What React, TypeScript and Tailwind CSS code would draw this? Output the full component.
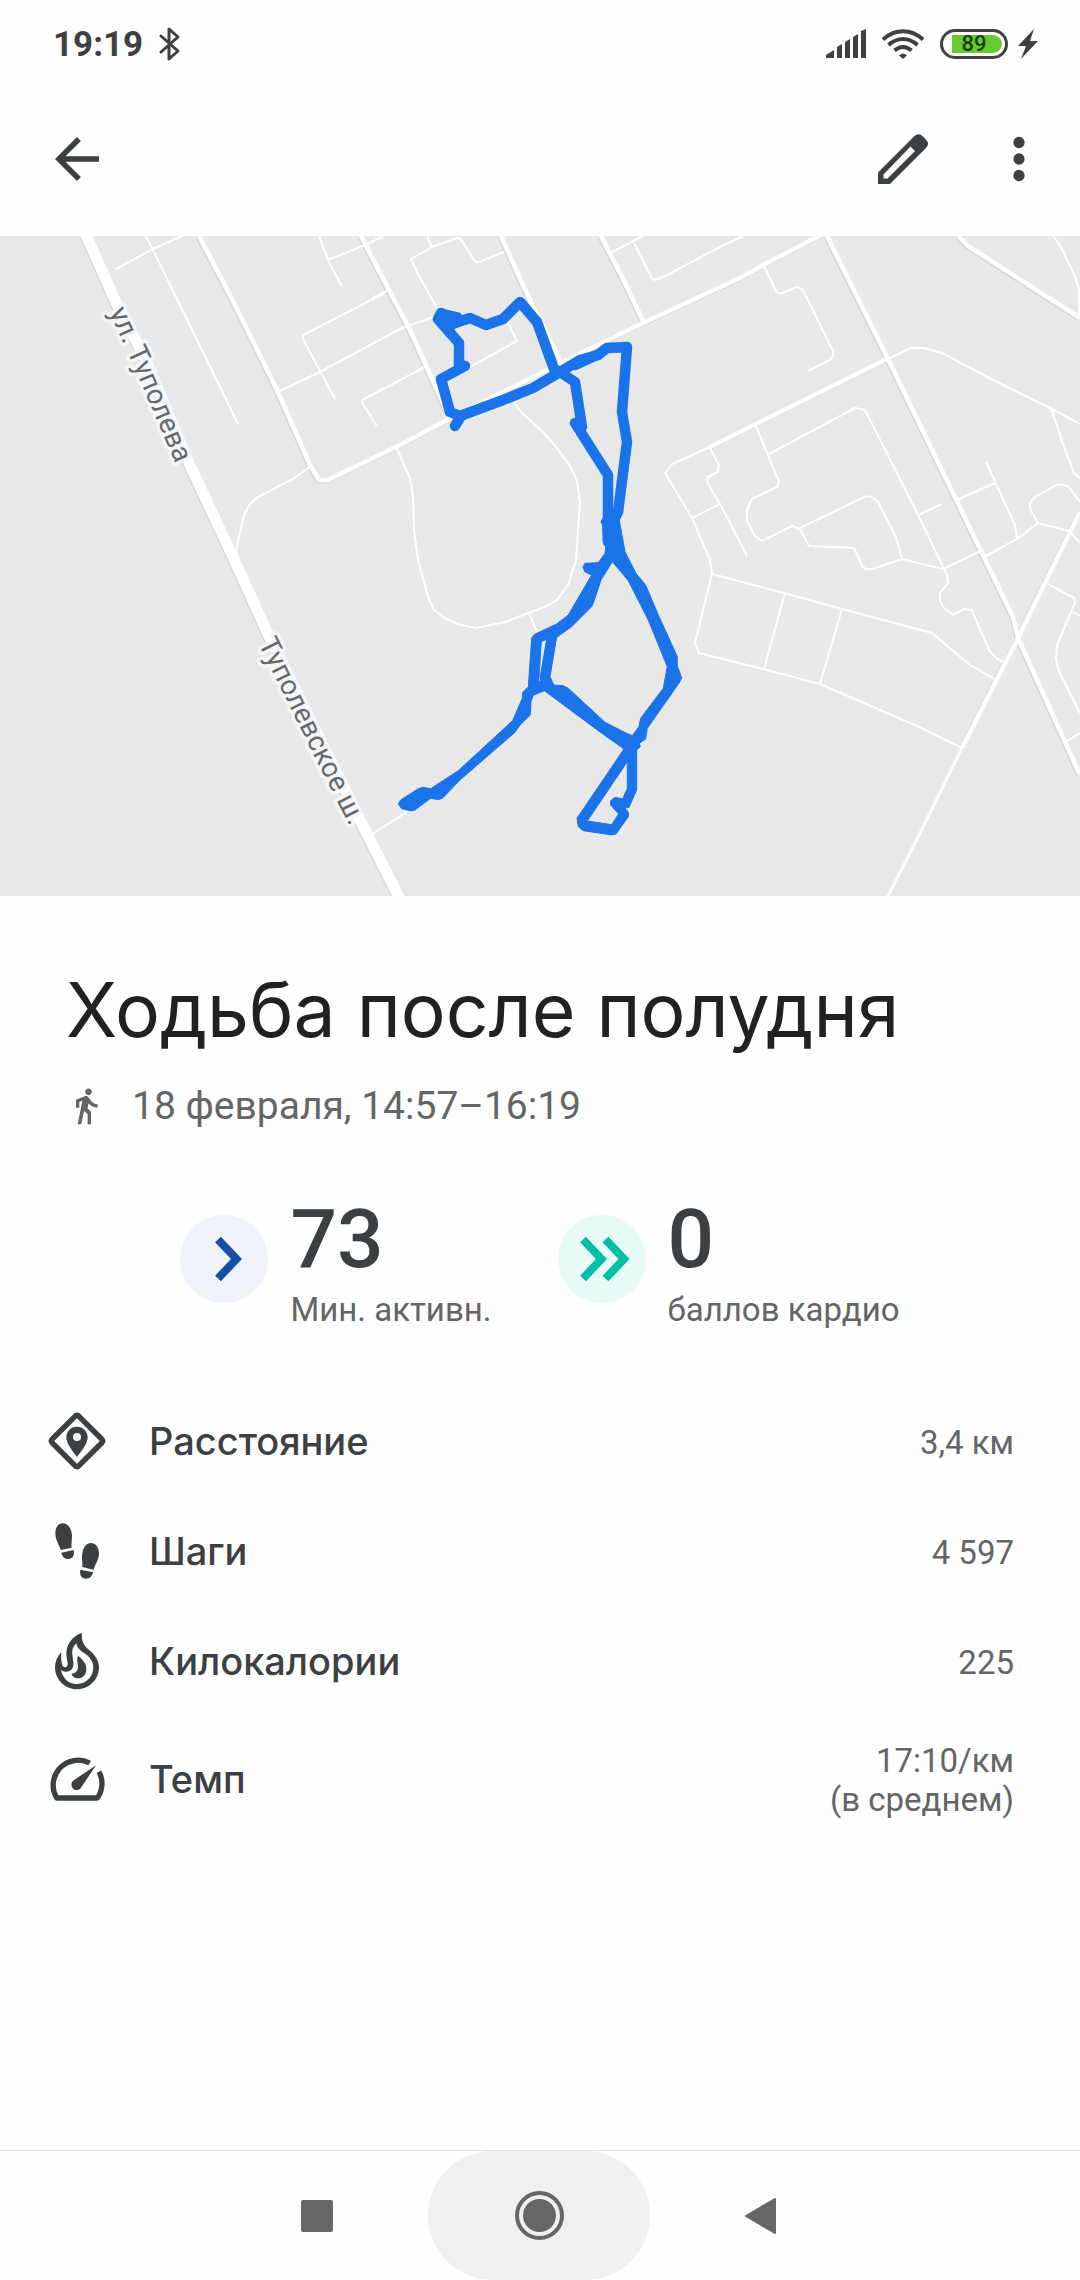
import type { ReactNode } from "react";

const MINOR_ROADS = [
  "M146 0L153 14L180 69L238 188",
  "M116 33L153 13L184 -1",
  "M310 231L293 243L258 261L250 268L244 279L235 319",
  "M278 156L320 136L400 93L408 90L433 81",
  "M385 57L305 98Q301 100 304 105L335 163",
  "M372 62L387 55",
  "M425 131L364 163Q361 164 363 168L377 190",
  "M319 0L328 24L342 51M328 24L365 9L386 -1",
  "M427 0L432 11M437 72L417 36L411 23L432 11L457 2Q460 2 462 5L474 24Q476 27 479 26L504 16",
  "M612 16L643 0M634 7L651 41Q653 45 658 43L667 39L720 11L743 0",
  "M508 87L517 105L470 131",
  "M514 167L522 177L543 196L553 207L570 230L577 245L580 267L576 324L568 349L557 364L545 371L528 377L505 386L476 392L457 388L443 381L434 374L428 361L418 324L414 294L413 261L410 242L396 211",
  "M529 377L537 396M407 576L380 593L373 598",
  "M708 212L672 228L665 237L692 282L710 324L712 338L695 407L699 417L763 433L820 448L917 490L962 512",
  "M712 338L784 357L842 373L932 397L970 429L996 444M785 357L764 433M842 373L820 448",
  "M710 212L719 229L718 236L708 241L707 246L720 268L747 320M692 282L720 268",
  "M888 123L911 112L924 112L942 117L993 144L1050 172L1080 188",
  "M1051 172L1063 208L1074 237L1080 242M1053 0L1061 11L1074 38L1079 54L1079 80",
  "M764 30L776 55Q778 58 782 57L797 51L803 54L833 115Q834 120 830 124L808 135",
  "M756 190L779 246L777 251L752 263L747 274L747 285L755 300L762 305L792 290L800 293L809 310L854 312L863 331Q866 334 872 333L902 323L943 333L983 314",
  "M769 218L855 172L865 174L918 279L947 339L948 347L940 357L940 365L944 372L953 379L964 373L972 374L989 414L997 423L1005 426",
  "M800 292L862 262Q870 257 878 266L896 301L902 323M918 279L942 268",
  "M957 264L995 247M986 226L1015 289L1017 303M986 320L1017 303L1038 287L1069 295L1080 307",
  "M1038 287L1030 273L1030 267L1035 261L1058 248L1068 250L1080 266",
  "M1048 348L1074 362L1075 367L1057 409L1056 423L1059 435L1080 477M1073 376L1080 380M1067 505L1080 497",
].join("");

const STREETS = [
  "M199 0L233 65L277 154L310 229L319 244L328 244L400 209L447 184L553 131L643 87L740 42L765 28L823 -2",
  "M361 0L380 37L410 94L447 176",
  "M501 0L522 47L538 81L562 128",
  "M601 0L625 47L644 87",
  "M708 212L740 196L887 123",
  "M827 0L888 123L1013 381L1018 402L1080 539",
  "M1080 276L1018 402L962 512",
  "M958 0L968 10L1080 82",
].join("");

const HIGHWAY = "M83 -8L118 71L145 122L188 225L233 321L267 396L362 588L402 667";

function RouteMap() {
  return (
    <svg viewBox="0 0 1080 660" className="block w-full bg-[#e8e8e8]" role="img" aria-label="Маршрут">
      <g fill="none" stroke="#d5d6d6" transform="translate(-1 1)">
        <path d={STREETS} strokeWidth="5" />
        <path d={HIGHWAY} strokeWidth="11" />
      </g>
      <g fill="none" stroke="#fff" strokeLinejoin="round">
        <path d={MINOR_ROADS} strokeWidth="2" />
        <path d="M962 512L917 603L887 662" strokeWidth="3" />
        <path d={STREETS} strokeWidth="4.500" />
        <path d={HIGHWAY} strokeWidth="11" />
      </g>

      <defs>
        <path id="street-north" d="M109 76L131 124L180 238" />
        <path id="street-south" d="M258 407L275 441L315 522L361 612" />
      </defs>
      <g
        className="font-['Roboto',sans-serif] text-[28px]"
        fill="#66696b"
        stroke="#f4f5f6"
        strokeWidth="7"
        strokeLinejoin="round"
        paintOrder="stroke"
      >
        <text>
          <textPath href="#street-north">ул. Туполева</textPath>
        </text>
        <text>
          <textPath href="#street-south">Туполевское ш.</textPath>
        </text>
      </g>

      {/* upper loops of the walk */}
      <g fill="none" stroke="#1a73e8" strokeWidth="10.500" strokeLinecap="round" strokeLinejoin="round">
        <path d="M452 88L470 82L486 89L503 83L520 66L537 86L554 133L560 136" />
        <path d="M441 77L438 83L459 107L459 129L465 130L441 143L450 176L460 180L503 164L533 152L560 136L580 124L598 119L607 112L627 111L622 176L627 206L618 276L612 288" />
        <path d="M455 190L461 180M575 129L597 119" />
        <path d="M560 136L575 146L582 191M575 187L608 239L608 306" />
      </g>
      <path
        d="M441 77L438 83L451 91L458 81Z"
        fill="#1a73e8"
        stroke="#1a73e8"
        strokeWidth="9"
        strokeLinejoin="round"
      />
      <path d="M570 187L587 189L580 200Z" fill="#1a73e8" />
      {/* lower part, where several passes merge into one shape */}
      <path
        transform="translate(380 324) scale(.3333)"
        fill="#1a73e8"
        stroke="#1a73e8"
        strokeWidth="3"
        strokeLinejoin="round"
        fillRule="evenodd"
        d="M716 -130L735 -25L750 5L768 40L797 75L835 165L892 290L892 318L905 353L900 365L802 505L797 537L778 550L781 560L770 570L770 690L747 742L735 744L746 758L745 770L708 822L695 825L610 812L595 800L591 775L732 567L655 512L493 392L460 406L453 425L451 465L420 495L405 517L240 660L188 714L175 719L152 715L105 750L92 753L65 746L55 732L62 720L115 686L128 682L152 686L235 632L398 482L427 415L428 398L445 380L455 235L462 224L530 192L565 165L635 45L615 36L609 22L615 10L655 8L675 -20L678 -45L670 -55L668 -105L663 -115L670 -128Z
           M697 5L745 62L805 180L862 320L850 385L782 475L777 500L757 527L740 520L675 487L565 385L550 377L522 375L510 350L530 232L575 200L635 140L640 130L663 60Z
           M484 245L500 238L481 350L482 362L476 367Z
           M742 605L742 685L728 717L705 712L692 722L692 735L716 762L695 794L622 783Z"
      />
    </svg>
  );
}

function StatusBar() {
  return (
    <div className="flex h-22 items-center justify-between pr-[42px] pl-[53px] text-[#3f4041]">
      <div className="flex items-center gap-4">
        <span className="text-[35px] leading-none font-bold">19:19</span>
        <svg viewBox="0 0 22 34" className="h-[34px] w-[22px]" fill="none" stroke="currentColor" strokeWidth="3" strokeLinejoin="round" strokeLinecap="round">
          <path d="M2 9L19 24L10 32V2L19 10L2 25" />
        </svg>
      </div>
      <div className="flex items-center">
        <svg viewBox="0 0 40 30" className="mr-4 h-[30px] w-10" fill="currentColor">
          <path d="M0 29v-3l8-5v8zM11 29V18l5-3v14zM19 29V13l5-3v19zM27 29V8l5-3v24zM35 29V2l5-2v29z" />
        </svg>
        <svg viewBox="0 0 42 30" className="mr-4 h-[30px] w-[42px]" fill="none" stroke="currentColor" strokeWidth="4">
          <path d="M1 10.500C13-.5 29-.5 41 10.500M6.500 16C15.500 8 26.500 8 35.500 16M12.500 21.500C18 17 24 17 29.500 21.500" />
          <path d="M17 26.500c2.500-2.500 5.500-2.500 8 0l-4 3.500z" fill="currentColor" stroke="none" />
        </svg>
        <div className="relative flex h-[30px] w-17 items-center justify-center rounded-full border-3 border-current">
          <div className="absolute inset-y-[3px] right-[3px] left-[9px] rounded-l-xs rounded-r-full bg-[#67cb2e]" />
          <span className="relative text-[22px] leading-none font-medium text-[#17400a]">89</span>
        </div>
        <svg viewBox="0 0 20 30" className="ml-[10px] h-[30px] w-5" fill="currentColor">
          <path d="M16 0L0 17h8L3 30L20 12h-8z" />
        </svg>
      </div>
    </div>
  );
}

function AppBar() {
  return (
    <header className="flex h-37 items-center justify-between pr-7 pb-1.5 pl-11 text-[#3c4043]">
      <button aria-label="Назад">
        <svg viewBox="0 0 24 24" className="size-[66px]" fill="currentColor">
          <path d="M20 11H7.830l5.590-5.590L12 4l-8 8 8 8 1.410-1.410L7.830 13H20v-2z" />
        </svg>
      </button>
      <div className="flex items-center gap-[50px]">
        <button aria-label="Изменить">
          <svg viewBox="0 0 66 66" className="size-[66px]" fill="currentColor" fillRule="evenodd">
            <path d="M8 58V46.500L44 10.500Q48.500 6 53 10.500L56 13.500Q60 18 56 22L20 58ZM13.500 52.500H17.500L45 25L40.500 20.500L13.500 48.500Z" />
          </svg>
        </button>
        <button aria-label="Ещё">
          <svg viewBox="0 0 24 24" className="size-[66px]" fill="currentColor">
            <circle cx="12" cy="6" r="2.050" />
            <circle cx="12" cy="12" r="2.050" />
            <circle cx="12" cy="18" r="2.050" />
          </svg>
        </button>
      </div>
    </header>
  );
}

function Score({ value, label, badge, children }: { value: string; label: string; badge: string; children: ReactNode }) {
  return (
    <div className="flex items-start gap-[22px]">
      <div className={`mt-[18px] flex size-22 items-center justify-center rounded-full ${badge}`}>{children}</div>
      <div>
        <div className="text-[82px] leading-[84px] font-medium text-[#3c4043]">{value}</div>
        <div className="mt-[9px] text-[33px] leading-[39px] text-[#636567]">{label}</div>
      </div>
    </div>
  );
}

const METRICS = [
  {
    label: "Расстояние",
    value: ["3,4 км"],
    icon: (
      <svg viewBox="135 57 192 192" className="size-16" fill="currentColor">
        <path d="M225 79Q231 72 237 79L305 147Q311 153 305 159L237 227Q231 234 225 227L157 159Q151 153 157 147Z" fill="none" stroke="currentColor" strokeWidth="16" />
        <path fillRule="evenodd" d="M231 110c-18 0-32 14-32 32 0 20 20 42 32 59 12-17 32-39 32-59 0-18-14-32-32-32zm0 19a12 12 0 1 1 0 24 12 12 0 0 1 0-24z" />
      </svg>
    ),
  },
  {
    label: "Шаги",
    value: ["4 597"],
    icon: (
      <svg viewBox="135 387 192 192" className="size-16" fill="currentColor">
        <path d="M188 400c14-1 27 14 28 37 0 14-3 26-1 36l-33 7c-4-14-16-30-16-50 0-18 8-29 22-30z" />
        <path d="M184 488l37-8c3 14-2 27-17 27-12 0-17-8-20-19z" />
        <path d="M272 459c16 0 25 14 25 32 0 18-12 32-16 48l-34-8c1-12-2-20-1-34 2-22 12-38 26-38z" />
        <path d="M241 539l38 8c-3 12-9 19-21 19-14 0-20-12-17-27z" />
      </svg>
    ),
  },
  {
    label: "Килокалории",
    value: ["225"],
    icon: (
      <svg viewBox="135 719 192 192" className="size-16" fill="currentColor">
        <path
          fillRule="evenodd"
          d="M246 731c-3 30 10 42 24 53 17 14 27 31 27 50 0 37-30 66-66 66s-66-29-66-66c0-18 7-33 19-46-1 14-1 20 1 30 1 10 4 16 10 16s9-6 8-14c-2-10-4-18-4-28 1-31 22-54 47-61zM229 762c-10 9-14 20-12 34l3 22c2 16-5 28-19 29-8 0-13-2-18-6 4 24 22 43 48 43 28 0 49-22 49-50 0-14-7-27-19-37-18-12-29-18-32-35z"
        />
        <path d="M234 799c15 12 25 24 25 40 0 17-10 28-25 28-9 0-17-5-20-14 12-1 20-9 20-20 0-13-5-20 0-34z" />
      </svg>
    ),
  },
  {
    label: "Темп",
    value: ["17:10/км", "(в среднем)"],
    icon: (
      <svg viewBox="135 1071 192 192" className="size-16" fill="currentColor">
        <path d="M269 1119A75 75 0 0 0 170 1224H292A75 75 0 0 0 297 1145" fill="none" stroke="currentColor" strokeWidth="16" strokeLinejoin="round" />
        <path d="M288 1126L245 1190A16 16 0 1 1 221 1171Z" />
      </svg>
    ),
  },
];

function NavBar() {
  return (
    <nav className="flex h-[130px] justify-center border-t border-[#dedede] pr-0.5 text-[#666]">
      <button aria-label="Недавние" className="flex w-[222px] items-center justify-center">
        <span className="size-8 rounded-xs bg-current" />
      </button>
      <button aria-label="Домой" className="flex w-[222px] items-center justify-center rounded-full bg-[#f0f0f0]">
        <span className="flex size-[49px] items-center justify-center rounded-full border-4 border-current">
          <span className="size-[33px] rounded-full bg-current" />
        </span>
      </button>
      <button aria-label="Назад" className="flex w-[222px] items-center justify-center">
        <svg viewBox="0 0 32 36" className="h-9 w-8" fill="currentColor" stroke="currentColor" strokeWidth="2" strokeLinejoin="round">
          <path d="M1 18L30 1V35Z" />
        </svg>
      </button>
    </nav>
  );
}

export default function App() {
  return (
    <div className="flex min-h-screen flex-col bg-[#fefefe] font-['Roboto',sans-serif]">
      <StatusBar />
      <AppBar />
      <RouteMap />

      <main className="flex-1">
        <div className="px-[66px] pt-16">
          <h1 className="font-['Inter',sans-serif] text-[75px] leading-[100px] text-[#202124]">Ходьба после полудня</h1>
          <div className="mt-[22px] flex items-center gap-[26px] text-[#636567]">
            <svg viewBox="0 0 24 24" className="size-10" fill="currentColor">
              <path d="M13.500 5.500c1.100 0 2-.9 2-2s-.9-2-2-2-2 .9-2 2 .9 2 2 2zM9.800 8.900L7 23h2.100l1.800-8 2.100 2v6h2v-7.500l-2.100-2 .6-3C14.800 12 16.800 13 19 13v-2c-1.900 0-3.500-1-4.300-2.400l-1-1.600c-.4-.6-1-1-1.700-1-.3 0-.5.100-.8.100L6 8.300V13h2V9.600l1.800-.7" />
            </svg>
            <p className="text-[39px] leading-[48px]">18 февраля, 14:57–16:19</p>
          </div>
        </div>

        <div className="mt-[67px] flex justify-center gap-[66px]">
          <Score value="73" label="Мин. активн." badge="bg-[#eff2f9]">
            <svg viewBox="0 0 88 88" className="size-22" fill="none" stroke="#174ea6" strokeWidth="8">
              <path d="M38 24.500L56.500 44L38 63.500" />
            </svg>
          </Score>
          <Score value="0" label="баллов кардио" badge="bg-[#e8faf6]">
            <svg viewBox="0 0 88 88" className="size-22" fill="none" stroke="#00bfa5" strokeWidth="8">
              <path d="M25 24.500L43.500 44L25 63.500M47.500 24.500L66 44L47.500 63.500" />
            </svg>
          </Score>
        </div>

        <dl className="mt-[57px] pr-[66px] pl-[45px]">
          {METRICS.map((metric) => (
            <div key={metric.label} className="flex items-center py-[23px] text-[#3c4043]">
              {metric.icon}
              <dt className="ml-10 flex-1 font-['Inter',sans-serif] text-[38px] leading-[48px] font-medium">{metric.label}</dt>
              <dd className="pt-0.5 text-right text-[33px] leading-[39px] text-[#636567]">
                {metric.value.map((line) => (
                  <span key={line} className="block">
                    {line}
                  </span>
                ))}
              </dd>
            </div>
          ))}
        </dl>
      </main>

      <NavBar />
    </div>
  );
}
